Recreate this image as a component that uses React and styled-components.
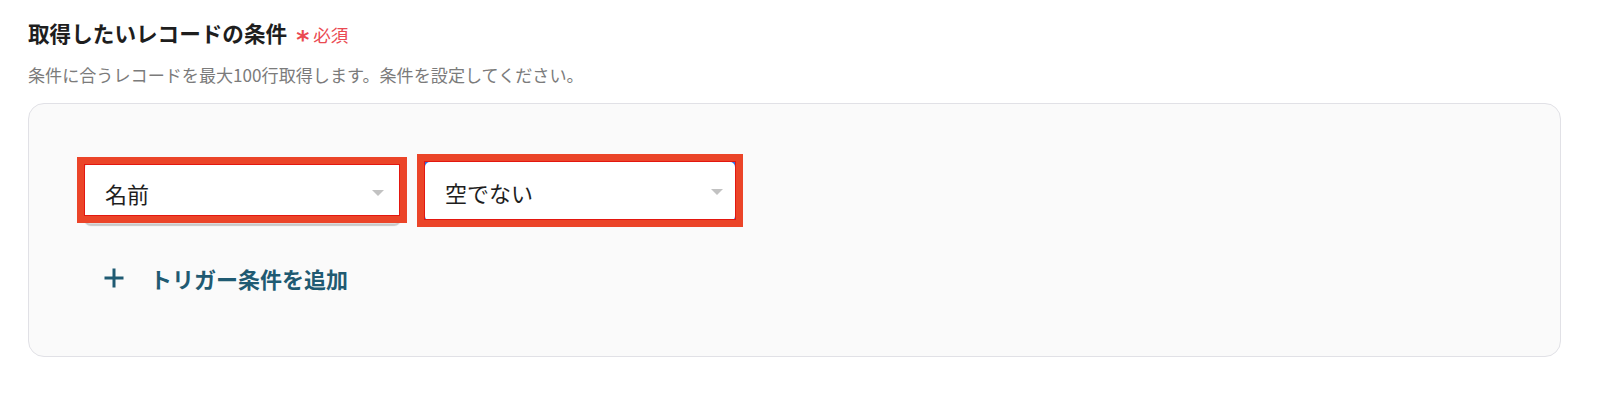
import React from "react";
import styled, { createGlobalStyle } from "styled-components";

const Global = createGlobalStyle`
  html, body { margin: 0; padding: 0; background: #ffffff; }
  body { font-family: "Noto Sans CJK JP", "Noto Sans", sans-serif; }
  * { box-sizing: border-box; }
`;

const Page = styled.div`
  padding: 17px 39px 0 28px;
  width: 1600px;
  height: 404px;
`;

const TitleRow = styled.div`
  display: flex;
  align-items: baseline;
  gap: 9px;
`;

const Title = styled.h2`
  margin: 0;
  font-size: 21.6px;
  line-height: 32px;
  font-weight: 700;
  color: #1e1e1e;
`;

const Required = styled.span`
  display: inline-flex;
  align-items: baseline;
  gap: 4px;
  font-size: 17.5px;
  font-weight: 400;
  color: #ea4a52;
`;

const Star = styled.span`
  font-family: "DejaVu Sans", sans-serif;
  font-weight: 700;
  font-size: 25px;
  line-height: 1;
  transform: translateY(6px);
`;

const Hint = styled.p`
  margin: 14px 0 0;
  font-size: 17.1px;
  line-height: 24px;
  color: #7b7b7b;
`;

const Panel = styled.div`
  margin-top: 16px;
  height: 254px;
  border: 1px solid #e1e1e6;
  border-radius: 16px;
  background: #fafafa;
  padding: 56px 0 0 55px;
`;

const Row = styled.div`
  display: flex;
  align-items: flex-start;
  gap: 22px;
`;

const Field = styled.div`
  position: relative;
  width: ${(p) => p.$width}px;
  margin-top: ${(p) => p.$offset || 0}px;
`;

const Select = styled.div`
  height: ${(p) => (p.$focused ? 63 : 62)}px;
  border-radius: 7px;
  background: #ffffff;
  border: ${(p) => (p.$focused ? "2px solid #2f6ee8" : "1px solid #dcdcdc")};
  box-shadow: ${(p) => (p.$focused ? "none" : "0 2px 1px rgba(0,0,0,0.2)")};
  display: flex;
  align-items: center;
  justify-content: space-between;
  padding: 0 ${(p) => (p.$focused ? 12 : 16)}px 0 20px;
  font-size: 22px;
  color: #1e1e1e;
`;

const Caret = styled.span`
  width: 0;
  height: 0;
  border-left: 6px solid transparent;
  border-right: 6px solid transparent;
  border-top: 6px solid #c2c2c2;
`;

const Highlight = styled.div`
  position: absolute;
  top: ${(p) => p.$t}px;
  left: ${(p) => p.$l}px;
  right: ${(p) => p.$r}px;
  bottom: ${(p) => p.$b}px;
  border: ${(p) => p.$w}px solid #eb4428;
  outline: 1px solid #e3170f;
  outline-offset: -${(p) => p.$w}px;
  pointer-events: none;
`;

const AddButton = styled.button`
  margin: 38px 0 0 20px;
  padding: 0;
  border: none;
  background: none;
  display: flex;
  align-items: center;
  gap: 26px;
  font-family: inherit;
  font-size: 22px;
  line-height: 32px;
  font-weight: 600;
  color: #1f5a72;
  cursor: pointer;
`;

const Plus = () => (
  <svg width="20" height="20" viewBox="0 0 20 20" aria-hidden="true">
    <path d="M10 0.5V19.5M0.5 10H19.5" stroke="#1f5a72" strokeWidth="3" fill="none" />
  </svg>
);

export default function App() {
  return (
    <>
      <Global />
      <Page>
        <TitleRow>
          <Title>取得したいレコードの条件</Title>
          <Required>
            <Star>*</Star>
            必須
          </Required>
        </TitleRow>
        <Hint>条件に合うレコードを最大100行取得します。条件を設定してください。</Hint>
        <Panel>
          <Row>
            <Field $width={317} $offset={2}>
              <Select>
                <span>名前</span>
                <Caret />
              </Select>
              <Highlight $t={-5} $l={-7} $r={-6} $b={1} $w={8} />
            </Field>
            <Field $width={314}>
              <Select $focused>
                <span>空でない</span>
                <Caret />
              </Select>
              <Highlight $t={-6} $l={-6} $r={-6} $b={-4} $w={8} />
            </Field>
          </Row>
          <AddButton type="button">
            <Plus />
            トリガー条件を追加
          </AddButton>
        </Panel>
      </Page>
    </>
  );
}
